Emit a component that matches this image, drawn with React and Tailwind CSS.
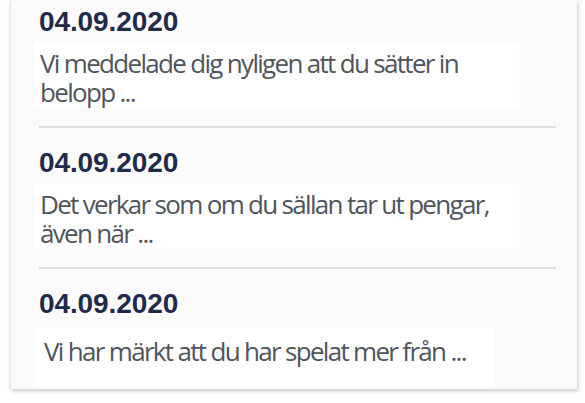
export default function App() {
  const items = [
    ["Vi meddelade dig nyligen att du sätter in", "belopp ..."],
    ["Det verkar som om du sällan tar ut pengar,", "även när ..."],
  ];
  const dateCls = "h-[32px] leading-[32px] text-[28px] font-bold text-[#1f2b4c] tracking-[-0.1px]";
  const bodyCls = "leading-[29px] text-[26px] text-[#50555c] tracking-[-0.065em] whitespace-nowrap";
  const dateFont = { fontFamily: '"Liberation Sans", Arial, sans-serif' };
  const bodyFont = { fontFamily: '"Open Sans", sans-serif' };
  return (
    <div className="w-[585px] h-[403px] bg-white overflow-hidden">
      <div className="ml-[10px] w-[567px] h-[389px] bg-[#fbfbfb] border-l border-[#e8e8e8] shadow-[1px_2px_4px_rgba(0,0,0,0.22)] pl-[28px] pr-[21px] pt-[6px] overflow-hidden">
        {items.map((lines, i) => (
          <div key={i}>
            <div className={dateCls} style={dateFont}>04.09.2020</div>
            <div className="mt-[4px] -ml-[5px] w-[485px] bg-white pt-[7px] pb-[1px] pl-[6px]">
              <div className={bodyCls} style={bodyFont}>
                {lines[0]}
                <br />
                {lines[1]}
              </div>
            </div>
            <div className="mt-[18px] mb-[19px] h-[2px] bg-[#dedede]" />
          </div>
        ))}
        <div>
          <div className={dateCls} style={dateFont}>04.09.2020</div>
          <div className="mt-[7px] -ml-[3px] w-[458px] bg-white pt-[10px] pb-[20px] pl-[8px]">
            <div className={bodyCls} style={bodyFont}>
              Vi har märkt att du har spelat mer från ...
            </div>
          </div>
        </div>
      </div>
    </div>
  );
}
